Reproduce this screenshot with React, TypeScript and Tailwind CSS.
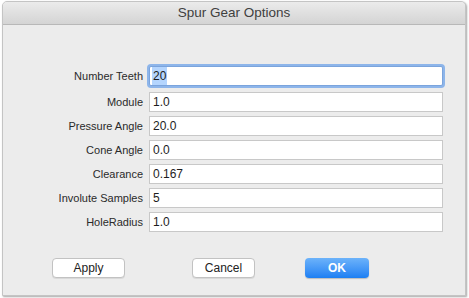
const fields = [
  { label: 'Number Teeth', value: '20', focused: true },
  { label: 'Module', value: '1.0' },
  { label: 'Pressure Angle', value: '20.0' },
  { label: 'Cone Angle', value: '0.0' },
  { label: 'Clearance', value: '0.167' },
  { label: 'Involute Samples', value: '5' },
  { label: 'HoleRadius', value: '1.0' },
]

export default function App() {
  return (
    <div className="h-[298px] w-[469px] bg-white pl-[2px] pt-[1px] font-['Liberation_Sans',Arial,sans-serif]">
      <div className="h-[295px] w-[464px] overflow-hidden rounded-t-[5px] border border-[#c4c4c4] bg-[#ececec] shadow-[1px_1px_2px_rgba(0,0,0,0.35)]">
        {/* Title bar */}
        <div className="flex h-[23px] items-center justify-center border-b border-[#b8b8b8] bg-gradient-to-b from-[#ebebeb] to-[#d4d4d4]">
          <span className="text-[13.5px] text-[#404040]">Spur Gear Options</span>
        </div>

        {/* Fields */}
        <div className="mt-[41px] grid grid-cols-[140px_294px] gap-x-[6px] gap-y-[4px]">
          {fields.map((f) => (
            <div key={f.label} className="contents">
              <div className={`flex h-[20px] items-center justify-end text-[11px] text-[#2a2a2a] ${f.focused ? 'mb-[2px]' : ''}`}>
                {f.label}
              </div>
              <div
                className={
                  f.focused
                    ? 'mb-[2px] flex h-[20px] items-center rounded-[2px] border border-[#7ba4dc] bg-white pl-[2px] shadow-[0_0_0_2px_#8db5ea] text-[12px] text-[#1d1d1d]'
                    : 'flex h-[20px] items-center border border-[#c8c8c8] bg-white pl-[3px] text-[12px] text-[#1d1d1d]'
                }
              >
                {f.focused ? <span className="bg-[#b4d5fe] px-[1px]">{f.value}</span> : f.value}
              </div>
            </div>
          ))}
        </div>

        {/* Buttons */}
        <div className="mt-[26px] flex items-center pl-[49px]">
          <button className="flex h-[20px] w-[73px] items-center justify-center rounded-[4px] border border-[#c2c2c2] bg-white text-[12px] text-[#222] shadow-[0_1px_0_rgba(0,0,0,0.08)]">
            Apply
          </button>
          <button className="ml-[67px] flex h-[20px] w-[63px] items-center justify-center rounded-[4px] border border-[#c2c2c2] bg-white text-[12px] text-[#222] shadow-[0_1px_0_rgba(0,0,0,0.08)]">
            Cancel
          </button>
          <button className="ml-[50px] flex h-[20px] w-[64px] items-center justify-center rounded-[4px] bg-gradient-to-b from-[#6cb3fa] to-[#1b7ff3] text-[12px] font-bold text-white shadow-[0_1px_1px_rgba(0,0,0,0.2)]">
            OK
          </button>
        </div>
      </div>
    </div>
  )
}
